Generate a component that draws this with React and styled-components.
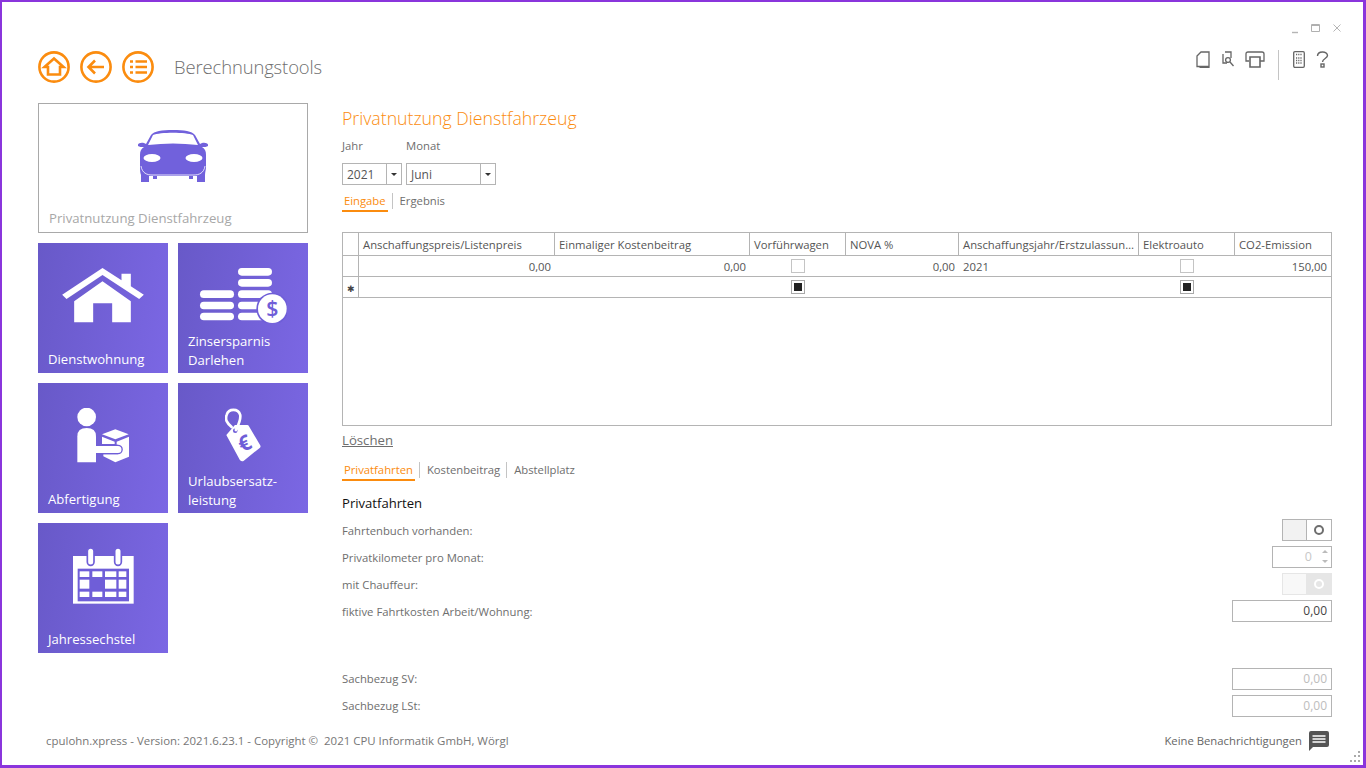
import React from 'react';
import styled, { createGlobalStyle } from 'styled-components';

const GlobalStyle = createGlobalStyle`
  html, body { margin: 0; padding: 0; background: #fff; }
  body { font-family: 'Open Sans', 'Noto Sans', sans-serif; font-size: 11.3px; color: #6e6e6e; }
  *, *::before, *::after { box-sizing: border-box; }
`;

const ORANGE = '#fb8c0f';
const LINE = '#b4b4b4';
const TILE = '#6f5ed8';

const Window = styled.div`
  position: relative;
  width: 1366px;
  height: 768px;
  overflow: hidden;
  background: #fff;
  border-style: solid;
  border-color: #8a35dc;
  border-width: 2px 3px 3px 2px;
  display: flex;
  flex-direction: column;
`;

const TitleBar = styled.div`
  height: 49px;
  flex: none;
  display: flex;
  justify-content: flex-end;
  align-items: flex-start;
  padding: 22px 22px 0 0;
  gap: 12px;
`;

const Header = styled.header`
  height: 52px;
  flex: none;
  display: flex;
  justify-content: space-between;
  align-items: flex-start;
  padding: 0 34px 0 36px;
`;

const HeaderLeft = styled.div`
  display: flex;
  align-items: center;
  height: 32px;
  gap: 10px;
`;

const PageName = styled.h1`
  margin: -2px 0 0 10px;
  font-size: 18.4px;
  font-weight: 300;
  color: #6f6f6f;
  letter-spacing: -0.1px;
`;

const Toolbar = styled.div`
  display: flex;
  align-items: flex-start;
  height: 30px;
`;

const ToolIcon = styled.svg`
  display: block;
  flex: none;
  margin-left: ${p => p.$left}px;
`;

const ToolDivider = styled.div`
  width: 1px;
  height: 30px;
  margin: -1px 0 0 13px;
  background: #c4c4c4;
`;

const Body = styled.div`
  height: 618px;
  flex: none;
  display: flex;
  padding-left: 36px;
  gap: 34px;
`;

const Sidebar = styled.nav`
  width: 270px;
  flex: none;
  display: grid;
  grid-template-columns: 130px 130px;
  grid-auto-rows: 130px;
  gap: 10px;
  align-content: start;
`;

const ActiveCard = styled.div`
  grid-column: 1 / 3;
  border: 1px solid #a9a9a9;
  padding: 25px 10px 4px;
  display: flex;
  flex-direction: column;
  align-items: center;
`;

const ActiveLabel = styled.div`
  margin-top: auto;
  align-self: flex-start;
  font-size: 13.2px;
  line-height: 19px;
  color: #a8a8a8;
`;

const Tile = styled.div`
  background: linear-gradient(100deg, #6859c8 0%, #7b67e4 100%);
  padding: 25px 10px 4px;
  display: flex;
  flex-direction: column;
  align-items: center;
`;

const TileLabel = styled.div`
  margin-top: auto;
  margin-bottom: ${p => (p.$wrapped ? -1 : 0)}px;
  align-self: flex-start;
  font-size: 13.1px;
  line-height: 19px;
  color: #fff;
`;

const Main = styled.main`
  width: 990px;
  flex: none;
  display: flex;
  flex-direction: column;
`;

const PageTitle = styled.h2`
  margin: 0;
  height: 30px;
  line-height: 30px;
  font-size: 17.7px;
  font-weight: 300;
  color: ${ORANGE};
`;

const PeriodLabels = styled.div`
  display: flex;
  height: 24px;
  align-items: center;
  margin-bottom: 6px;
`;

const PeriodLabel = styled.div`
  width: ${p => p.$width}px;
`;

const PeriodSelects = styled.div`
  display: flex;
  gap: 4px;
`;

const Select = styled.div`
  width: ${p => p.$width}px;
  height: 22px;
  border: 1px solid ${LINE};
  display: flex;
  align-items: center;
  color: #555;
  font-size: 12px;
`;

const SelectValue = styled.div`
  flex: 1;
  padding-left: 4px;
`;

const SelectArrow = styled.div`
  width: 15px;
  height: 100%;
  border-left: 1px solid ${LINE};
  display: flex;
  align-items: center;
  justify-content: center;
  &::after {
    content: '';
    border-left: 3px solid transparent;
    border-right: 3px solid transparent;
    border-top: 3px solid #333;
  }
`;

const Tabs = styled.div`
  display: flex;
  height: 22px;
  flex: none;
  align-items: flex-start;
  margin-top: ${p => p.$top}px;
`;

const Tab = styled.div`
  height: 22px;
  padding: 0 2px;
  line-height: 21px;
  letter-spacing: -0.02px;
  color: ${p => (p.$active ? ORANGE : '#6e6e6e')};
  border-bottom: 2px solid ${p => (p.$active ? ORANGE : 'transparent')};
`;

const TabDivider = styled.div`
  width: 1px;
  height: 16px;
  margin: 3px 5px 0 4px;
  background: #c4c4c4;
`;

const GridFrame = styled.div`
  margin-top: 20px;
  height: 194px;
  border: 1px solid ${LINE};
  flex: none;
`;

const DataGrid = styled.table`
  width: 988px;
  table-layout: fixed;
  border-collapse: separate;
  border-spacing: 0;
`;

const HeadCell = styled.th`
  height: 23px;
  padding: 0 0 0 4px;
  font-weight: 400;
  text-align: left;
  white-space: nowrap;
  overflow: hidden;
  color: #555;
  border-right: ${p => (p.$last ? 'none' : `1px solid ${LINE}`)};
  border-bottom: 1px solid ${LINE};
`;

const Cell = styled.td`
  height: 21px;
  padding: ${p => (p.$indicator ? 0 : '0 4px')};
  text-align: ${p => p.$align || 'left'};
  color: #555;
  white-space: nowrap;
  border-bottom: 1px solid ${LINE};
  border-right: ${p => (p.$indicator ? `1px solid ${LINE}` : 'none')};
`;

const Check = styled.span`
  display: flex;
  width: 14px;
  height: 14px;
  margin: -1px auto 0;
  border: 1px solid ${p => (p.$mixed ? '#a9a9a9' : '#c4c4c4')};
  align-items: center;
  justify-content: center;
  &::after {
    content: '';
    display: ${p => (p.$mixed ? 'block' : 'none')};
    width: 8px;
    height: 8px;
    background: #222;
  }
`;

const NewRowMark = styled.span`
  color: #444;
  font-size: 9px;
  line-height: 9px;
`;

const DeleteLink = styled.a`
  height: 28px;
  line-height: 29px;
  font-size: 13.2px;
  color: #6e6e6e;
  text-decoration: underline;
  flex: none;
`;

const SectionTitle = styled.h3`
  margin: 11px 0 2px;
  height: 22px;
  line-height: 22px;
  flex: none;
  font-size: 13.1px;
  font-weight: 400;
  color: #111;
`;

const FieldRow = styled.div`
  height: 27px;
  flex: none;
  display: flex;
  align-items: center;
  justify-content: space-between;
  margin-top: ${p => p.$top || 0}px;
`;

const FieldLabel = styled.span`
  margin-top: ${p => p.$top ?? 2}px;
`;

const Toggle = styled.div`
  width: 50px;
  height: 22px;
  display: flex;
  border: 1px solid ${p => (p.$disabled ? '#e6e6e6' : LINE)};
`;

const ToggleTrack = styled.div`
  width: 24px;
  background: ${p => (p.$disabled ? '#f8f8f8' : '#f2f2f2')};
  border-right: 1px solid ${p => (p.$disabled ? '#e6e6e6' : LINE)};
`;

const ToggleKnob = styled.div`
  flex: 1;
  display: flex;
  align-items: center;
  justify-content: center;
  background: ${p => (p.$disabled ? '#e6e6e6' : '#fff')};
  &::after {
    content: '';
    width: 10px;
    height: 10px;
    border-radius: 50%;
    border: 2.4px solid ${p => (p.$disabled ? '#fff' : '#6e6e6e')};
  }
`;

const Spinner = styled.div`
  width: 60px;
  height: 22px;
  border: 1px solid ${LINE};
  display: flex;
  align-items: center;
  justify-content: flex-end;
  color: #c8c8c8;
  font-size: 12.5px;
`;

const SpinnerArrows = styled.div`
  width: 13px;
  display: flex;
  flex-direction: column;
  align-items: center;
  gap: 7px;
  margin-left: 6px;
`;

const SpinnerArrow = styled.div`
  border-left: 3px solid transparent;
  border-right: 3px solid transparent;
  border-bottom: ${p => (p.$down ? 'none' : '3px solid #bbb')};
  border-top: ${p => (p.$down ? '3px solid #bbb' : 'none')};
`;

const AmountInput = styled.div`
  width: 100px;
  height: 22px;
  line-height: 20px;
  border: 1px solid ${LINE};
  text-align: right;
  padding-right: 4px;
  font-size: 12px;
  color: ${p => (p.$muted ? '#bdbdbd' : '#444')};
`;

const Footer = styled.footer`
  flex: 1;
  display: flex;
  align-items: center;
  justify-content: space-between;
  padding: 0 34px 5px 44px;
`;

const Version = styled.div`
  color: #767676;
  font-size: 11.45px;
  white-space: pre;
`;

const Notifications = styled.div`
  display: flex;
  align-items: center;
  gap: 7px;
  color: #666;
`;

const Grip = styled.svg`
  position: absolute;
  right: 2px;
  bottom: 2px;
`;

const RoundButton = ({ children }) => (
  <svg width="32" height="32" viewBox="0 0 32 32" fill="none" stroke={ORANGE} strokeWidth="2.6">
    <circle cx="16" cy="16" r="14.6" />
    {children}
  </svg>
);

const HomeButton = () => (
  <RoundButton>
    <path d="M6.5 16 L16 7.5 L25.5 16 H22 V23.5 H10 V16 Z" strokeLinejoin="miter" />
  </RoundButton>
);

const BackButton = () => (
  <RoundButton>
    <path d="M24 16 H9 M15 9.5 L8.5 16 L15 22.5" />
  </RoundButton>
);

const ListButton = () => (
  <RoundButton>
    <path d="M8 10.5 H11 M13.5 10.5 H25 M8 16 H11 M13.5 16 H25 M8 21.5 H11 M13.5 21.5 H25" />
  </RoundButton>
);

const CarIcon = () => (
  <svg width="70" height="54" viewBox="0 0 70 54">
    <path fill="#7161dc" d="M13 6 C16 2 24 1 35 1 C46 1 54 2 57 6 L62 15 L64 14 C68 13 71 15 70 17 C69 18 66 18 64 18 C67 20 68 22 68 26 L68 38 C68 41 67 43 67 46 L67 53 L59 53 L59 47 L55 47 L55 50 L51 50 L51 47 L19 47 L19 50 L15 50 L15 47 L11 47 L11 53 L3 53 L3 46 C2 43 2 41 2 38 L2 26 C2 22 3 20 6 18 C4 18 1 18 0 17 C-1 15 2 13 6 14 L8 15 Z" />
    <path fill="#fff" d="M15 6 C22 3 48 3 55 6 L60 16 Q35 13 10 16 Z" />
    <ellipse cx="14" cy="29" rx="8.5" ry="4" fill="#fff" />
    <ellipse cx="56" cy="29" rx="8.5" ry="4" fill="#fff" />
    <path fill="none" stroke="#fff" strokeWidth="0.8" d="M3 37 C4 44 9 46 14 46 H56 C61 46 66 44 67 37" />
  </svg>
);

const HouseIcon = () => (
  <svg width="82" height="55" viewBox="97 85 245 165" fill="#fff">
    <path d="M97 165 L218 85 L275 122 V102 H303 V140 L342 165 L328 178 L218 106 L110 178 Z" />
    <path d="M133 185 L218 125 L303 185 V248 H247 V191 H190 V248 H133 Z" />
  </svg>
);

const CoinBar = ({ x, y }) => <rect x={x} y={y} width="102" height="23" rx="11.5" />;

const CoinsIcon = () => (
  <svg width="88" height="55" viewBox="507 85 264 165" fill="#fff">
    {[152, 186, 219].map(y => <CoinBar key={y} x={510} y={y} />)}
    {[85, 118, 152, 186, 219].map(y => <CoinBar key={y} x={624} y={y} />)}
    <circle cx="727" cy="207" r="48" fill={TILE} />
    <circle cx="727" cy="207" r="43" />
    <text x="727" y="230" textAnchor="middle" fontSize="64" fontWeight="600" fontFamily="'Open Sans', sans-serif" fill={TILE}>$</text>
  </svg>
);

const PersonIcon = () => (
  <svg width="53" height="55" viewBox="140 505 159 165" fill="#fff">
    <circle cx="169" cy="532" r="28" />
    <path d="M215 584 L255 569 L295 584 L255 599 Z" />
    <path d="M215 591 L253 606 V613 H215 Z" />
    <path d="M259 606 L296 591 V651 L255 668 L219 650 V644 H262 Q272 640 272 630 Q272 620 262 615 H259 Z" />
    <path d="M190 617 H263 A12 12 0 0 1 263 642 H190 Z" stroke={TILE} strokeWidth="4" />
    <path d="M141 668 V590 Q141 565 169 565 Q197 565 197 590 V668 Z" />
  </svg>
);

const TagIcon = () => (
  <svg width="36" height="55" viewBox="585 505 109 165" fill="#fff">
    <path d="M589 586 L615 556 H652 Q656 556 658 560 L692 618 Q694 622 690 625 L642 664 Q636 668 630 662 Z" />
    <circle cx="616" cy="573" r="7" fill={TILE} />
    <path fill="none" stroke="#fff" strokeWidth="8" strokeLinecap="round" d="M605 562 C590 548 585 540 590 525 C596 505 625 505 631 525 C634 540 625 555 618 571" />
    <text x="645" y="633" transform="rotate(-25 645 612)" textAnchor="middle" fontSize="64" fontWeight="700" fontFamily="'Open Sans', sans-serif" fill={TILE}>€</text>
  </svg>
);

const CALENDAR_ROWS = [[168, 17], [193, 27], [229, 16]];
const CALENDAR_COLS = [[148, 29], [186, 30], [224, 34], [265, 23]];

const CalendarIcon = () => (
  <svg width="61" height="56" viewBox="128 98 183 168" fill="#fff">
    <rect x="128" y="122" width="182" height="143" />
    <rect x="142" y="160" width="154" height="98" fill={TILE} />
    {CALENDAR_ROWS.map(([y, h], r) => CALENDAR_COLS.map(([x, w], c) => (
      r === 1 && c === 1 ? null : <rect key={`${r}-${c}`} x={x} y={y} width={w} height={h} />
    )))}
    <rect x="171" y="98" width="20" height="52" rx="10" stroke={TILE} strokeWidth="5" />
    <rect x="253" y="98" width="20" height="52" rx="10" stroke={TILE} strokeWidth="5" />
  </svg>
);

const ChatIcon = () => (
  <svg width="20" height="20" viewBox="0 0 20 20">
    <path fill="#555" d="M2 0 H18 Q20 0 20 2 V14 Q20 16 18 16 H4 L0 20 V2 Q0 0 2 0 Z" />
    <path stroke="#fff" strokeWidth="1.6" d="M3.5 5 H16.5 M3.5 8 H16.5 M3.5 11 H16.5" />
  </svg>
);

const columns = [16, 196, 195, 96, 113, 180, 96, 96];

const heads = [
  'Anschaffungspreis/Listenpreis',
  'Einmaliger Kostenbeitrag',
  'Vorführwagen',
  'NOVA %',
  'Anschaffungsjahr/Erstzulassun…',
  'Elektroauto',
  'CO2-Emission',
];

const App = () => (
  <Window>
    <GlobalStyle />
    <TitleBar>
      <svg width="8" height="10" viewBox="0 0 8 10"><path d="M1 8.5 H7" stroke="#b5b5b5" strokeWidth="1.4" /></svg>
      <svg width="9" height="8" viewBox="0 0 9 8" fill="none"><path d="M.5 .5 H8.5 V7.5 H.5 Z M.5 1.5 H8.5" stroke="#b0b0b0" /></svg>
      <svg width="8" height="8" viewBox="0 0 8 8" style={{ marginLeft: 1 }}><path d="M.5 .5 L7.5 7.5 M7.5 .5 L.5 7.5" stroke="#b5b5b5" /></svg>
    </TitleBar>
    <Header>
      <HeaderLeft>
        <HomeButton />
        <BackButton />
        <ListButton />
        <PageName>Berechnungstools</PageName>
      </HeaderLeft>
      <Toolbar>
        <ToolIcon $left={0} width="14" height="17" viewBox="0 0 14 17" fill="none" stroke="#666" strokeWidth="1.3">
          <path d="M1 5 L5 1 H13 V15.5 H1 Z M3.5 16.3 H13.6" />
        </ToolIcon>
        <ToolIcon $left={12} width="12" height="17" viewBox="0 0 12 17" fill="none" stroke="#666" strokeWidth="1.3">
          <path d="M3 1 H9 V7 M1 3 V12 H5" />
          <circle cx="6" cy="9" r="2.4" />
          <path d="M8 11 L11.5 15" />
        </ToolIcon>
        <ToolIcon $left={11} width="20" height="17" viewBox="0 0 20 17" fill="none" stroke="#666" strokeWidth="1.3">
          <path d="M4 10 H1 V3 Q1 1 3 1 H17 Q19 1 19 3 V10 H15" />
          <path d="M5 6 H15 V16 H5 Z" strokeWidth="1.6" />
        </ToolIcon>
        <ToolDivider />
        <ToolIcon $left={14} width="12" height="17" viewBox="0 0 12 17" fill="none" stroke="#666">
          <rect x=".7" y=".7" width="10.6" height="15.6" rx="1.2" strokeWidth="1.3" />
          <path d="M3 3.5 H9 M3 7 H9 M3 9.5 H9 M3 12 H9" strokeWidth="1.4" strokeDasharray="1.2 1" />
        </ToolIcon>
        <ToolIcon $left={11} width="13" height="17" viewBox="0 0 13 17" fill="none" stroke="#666" strokeWidth="1.4">
          <path d="M1.5 5 C1.5 -0.3 11.5 -0.3 11.5 4.5 C11.5 7.5 6.5 7.5 6.5 11" />
          <rect x="5" y="13" width="3" height="3" />
        </ToolIcon>
      </Toolbar>
    </Header>
    <Body>
      <Sidebar>
        <ActiveCard>
          <CarIcon />
          <ActiveLabel>Privatnutzung Dienstfahrzeug</ActiveLabel>
        </ActiveCard>
        <Tile><HouseIcon /><TileLabel>Dienstwohnung</TileLabel></Tile>
        <Tile><CoinsIcon /><TileLabel $wrapped>Zinsersparnis<br />Darlehen</TileLabel></Tile>
        <Tile><PersonIcon /><TileLabel>Abfertigung</TileLabel></Tile>
        <Tile><TagIcon /><TileLabel $wrapped>Urlaubsersatz-<br />leistung</TileLabel></Tile>
        <Tile><CalendarIcon /><TileLabel>Jahressechstel</TileLabel></Tile>
      </Sidebar>
      <Main>
        <PageTitle>Privatnutzung Dienstfahrzeug</PageTitle>
        <PeriodLabels>
          <PeriodLabel $width={64}>Jahr</PeriodLabel>
          <PeriodLabel $width={90}>Monat</PeriodLabel>
        </PeriodLabels>
        <PeriodSelects>
          <Select $width={60}><SelectValue>2021</SelectValue><SelectArrow /></Select>
          <Select $width={90}><SelectValue>Juni</SelectValue><SelectArrow /></Select>
        </PeriodSelects>
        <Tabs $top={5}>
          <Tab $active>Eingabe</Tab>
          <TabDivider />
          <Tab>Ergebnis</Tab>
        </Tabs>
        <GridFrame>
          <DataGrid>
            <colgroup>
              {columns.map((w, i) => <col key={i} style={{ width: w }} />)}
            </colgroup>
            <thead>
              <tr>
                <HeadCell />
                {heads.map((h, i) => <HeadCell key={h} $last={i === heads.length - 1}>{h}</HeadCell>)}
              </tr>
            </thead>
            <tbody>
              <tr>
                <Cell $indicator />
                <Cell $align="right">0,00</Cell>
                <Cell $align="right">0,00</Cell>
                <Cell><Check /></Cell>
                <Cell $align="right">0,00</Cell>
                <Cell>2021</Cell>
                <Cell><Check /></Cell>
                <Cell $align="right">150,00</Cell>
              </tr>
              <tr>
                <Cell $indicator $align="center"><NewRowMark>✱</NewRowMark></Cell>
                <Cell />
                <Cell />
                <Cell><Check $mixed /></Cell>
                <Cell />
                <Cell />
                <Cell><Check $mixed /></Cell>
                <Cell />
              </tr>
            </tbody>
          </DataGrid>
        </GridFrame>
        <DeleteLink>Löschen</DeleteLink>
        <Tabs $top={5}>
          <Tab $active>Privatfahrten</Tab>
          <TabDivider />
          <Tab>Kostenbeitrag</Tab>
          <TabDivider />
          <Tab>Abstellplatz</Tab>
        </Tabs>
        <SectionTitle>Privatfahrten</SectionTitle>
        <FieldRow>
          <FieldLabel>Fahrtenbuch vorhanden:</FieldLabel>
          <Toggle><ToggleTrack /><ToggleKnob /></Toggle>
        </FieldRow>
        <FieldRow>
          <FieldLabel>Privatkilometer pro Monat:</FieldLabel>
          <Spinner>0<SpinnerArrows><SpinnerArrow /><SpinnerArrow $down /></SpinnerArrows></Spinner>
        </FieldRow>
        <FieldRow>
          <FieldLabel>mit Chauffeur:</FieldLabel>
          <Toggle $disabled><ToggleTrack $disabled /><ToggleKnob $disabled /></Toggle>
        </FieldRow>
        <FieldRow>
          <FieldLabel>fiktive Fahrtkosten Arbeit/Wohnung:</FieldLabel>
          <AmountInput>0,00</AmountInput>
        </FieldRow>
        <FieldRow $top={41}>
          <FieldLabel $top={0}>Sachbezug SV:</FieldLabel>
          <AmountInput $muted>0,00</AmountInput>
        </FieldRow>
        <FieldRow>
          <FieldLabel $top={0}>Sachbezug LSt:</FieldLabel>
          <AmountInput $muted>0,00</AmountInput>
        </FieldRow>
      </Main>
    </Body>
    <Footer>
      <Version>cpulohn.xpress - Version: 2021.6.23.1 - Copyright ©  2021 CPU Informatik GmbH, Wörgl</Version>
      <Notifications>Keine Benachrichtigungen <ChatIcon /></Notifications>
    </Footer>
    <Grip width="12" height="12" viewBox="0 0 12 12" fill="#aaa">
      <rect x="9" y="0" width="2" height="2" />
      <rect x="9" y="4" width="2" height="2" /><rect x="5" y="4" width="2" height="2" />
      <rect x="9" y="9" width="2" height="2" /><rect x="5" y="9" width="2" height="2" /><rect x="1" y="9" width="2" height="2" />
    </Grip>
  </Window>
);

export default App;
